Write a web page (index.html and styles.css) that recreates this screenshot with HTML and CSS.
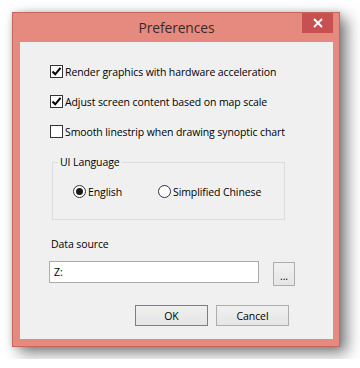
FILE: index.html
```html
<!DOCTYPE html>
<html lang="en">
<head>
    <meta charset="UTF-8">
    <meta name="viewport" content="width=device-width, initial-scale=1.0">
    <title>Preferences</title>
    <link rel="stylesheet" href="styles.css">
</head>
<body>
    <div class="window">
        <div class="titlebar">
            <div class="title">Preferences</div>
            <div class="close">
                <svg width="10" height="10" viewBox="0 0 10 10">
                    <path d="M1 1 L9 9 M9 1 L1 9" stroke="#fff" stroke-width="1.8"/>
                </svg>
            </div>
        </div>

        <div class="client">
            <div class="options">
                <label class="check-row">
                    <span class="checkbox">
                        <svg width="11" height="11" viewBox="0 0 11 11">
                            <path d="M1.5 5.5 L4.2 8.3 L9.5 1.8" fill="none" stroke="#000" stroke-width="2"/>
                        </svg>
                    </span>
                    Render graphics with hardware acceleration
                </label>
                <label class="check-row">
                    <span class="checkbox">
                        <svg width="11" height="11" viewBox="0 0 11 11">
                            <path d="M1.5 5.5 L4.2 8.3 L9.5 1.8" fill="none" stroke="#000" stroke-width="2"/>
                        </svg>
                    </span>
                    Adjust screen content based on map scale
                </label>
                <label class="check-row">
                    <span class="checkbox"></span>
                    Smooth linestrip when drawing synoptic chart
                </label>
            </div>

            <fieldset class="group">
                <legend>UI Language</legend>
                <div class="radios">
                    <label class="radio-row">
                        <span class="radio checked"></span>
                        English
                    </label>
                    <label class="radio-row">
                        <span class="radio"></span>
                        Simplified Chinese
                    </label>
                </div>
            </fieldset>

            <div class="source">
                <div class="source-label">Data source</div>
                <div class="source-row">
                    <div class="textbox">Z:</div>
                    <div class="btn browse">...</div>
                </div>
            </div>

            <div class="actions">
                <div class="btn default">OK</div>
                <div class="btn">Cancel</div>
            </div>
        </div>
    </div>
</body>
</html>
```

FILE: styles.css
```css
body {
    margin: 0;
    padding: 12px;
    background: #fff;
    font-family: "Open Sans", "Noto Sans", sans-serif;
    font-size: 10.5px;
    letter-spacing: -0.1px;
    color: #000;
}
.window {
    width: 328px;
    height: 335px;
    box-sizing: border-box;
    border: 1px solid #c4675d;
    background: #e68a7f;
    padding: 0 6px 7px 7px;
    display: flex;
    flex-direction: column;
    box-shadow: 7px 6px 14px rgba(0, 0, 0, 0.5), 0 0 6px rgba(0, 0, 0, 0.15);
}
.titlebar {
    height: 29px;
    display: flex;
    align-items: flex-start;
}
.title {
    flex: 1;
    padding-left: 31px;
    text-align: center;
    font-size: 13.8px;
    line-height: 30px;
    color: #3a2a2a;
}
.close {
    width: 31px;
    height: 20px;
    background: #c75050;
    display: flex;
    align-items: center;
    justify-content: center;
}
.client {
    flex: 1;
    background: #f0f0f0;
    padding: 23px 0 0 30px;
}
.options {
    display: flex;
    flex-direction: column;
    gap: 17px;
}
.check-row, .radio-row {
    display: flex;
    align-items: center;
    gap: 2px;
    height: 13px;
    white-space: nowrap;
}
.checkbox {
    width: 13px;
    height: 13px;
    box-sizing: border-box;
    border: 1px solid #333;
    background: #fff;
    display: flex;
    align-items: center;
    justify-content: center;
}
.group {
    width: 233px;
    height: 65px;
    box-sizing: border-box;
    margin: 17px 0 0 2px;
    padding: 0 0 0 20px;
    border: 1px solid #dcdcdc;
    legend {
        padding: 0 2px;
        margin-left: -15px;
        line-height: 14px;
    }
}
.radios {
    display: flex;
    gap: 36px;
    padding-top: 16px;
}
.radio {
    width: 13px;
    height: 13px;
    box-sizing: border-box;
    border: 1px solid #333;
    border-radius: 50%;
    background: #fff;
    display: flex;
    align-items: center;
    justify-content: center;
}
.radio.checked::after {
    content: "";
    width: 7px;
    height: 7px;
    border-radius: 50%;
    background: #1a1a1a;
}
.source {
    margin-top: 16px;
}
.source-label {
    padding-left: 1px;
    line-height: 16px;
}
.source-row {
    display: flex;
    align-items: flex-start;
    gap: 14px;
    margin-top: 9px;
    margin-left: -1px;
}
.textbox {
    width: 210px;
    height: 22px;
    box-sizing: border-box;
    border: 1px solid #ababab;
    background: #fff;
    padding-left: 4px;
    line-height: 20px;
}
.btn {
    box-sizing: border-box;
    border: 1px solid #adadad;
    background: linear-gradient(#f0f0f0, #e5e5e5);
    display: flex;
    align-items: center;
    justify-content: center;
    width: 73px;
    height: 21px;
}
.browse {
    width: 22px;
    height: 24px;
    margin-top: 1px;
    padding-top: 4px;
}
.default {
    border-color: #3c8de0;
}
.actions {
    display: flex;
    gap: 8px;
    margin-top: 19px;
    padding-left: 85px;
}
```
